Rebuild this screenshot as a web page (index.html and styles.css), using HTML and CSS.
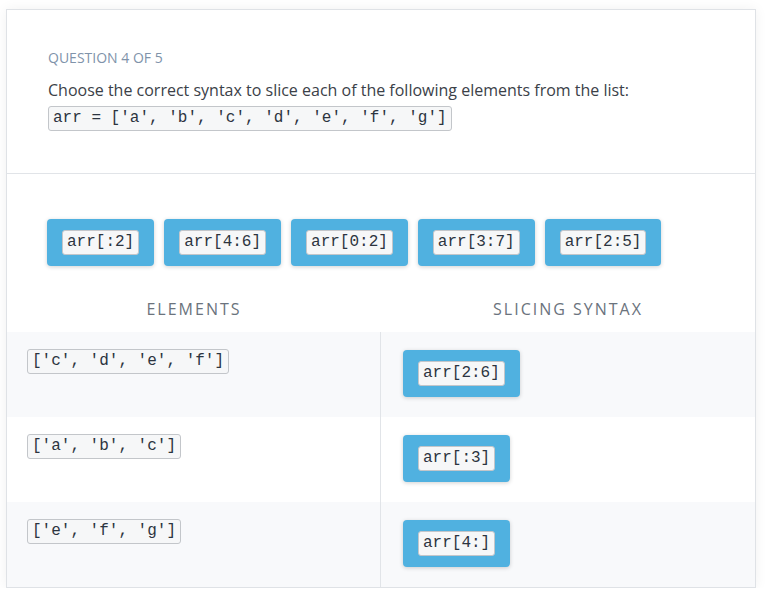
FILE: index.html
```html
<!DOCTYPE html>
<html>
<head>
<meta charset="utf-8">
<link rel="stylesheet" href="styles.css">
</head>
<body>
<div class="card">
  <div class="head">
    <div class="label">QUESTION 4 OF 5</div>
    <div class="prompt">Choose the correct syntax to slice each of the following elements from the list:</div>
    <div class="snippet"><code class="code">arr = ['a', 'b', 'c', 'd', 'e', 'f', 'g']</code></div>
  </div>
  <div class="bank">
    <div class="chip"><code class="code">arr[:2]</code></div>
    <div class="chip"><code class="code">arr[4:6]</code></div>
    <div class="chip"><code class="code">arr[0:2]</code></div>
    <div class="chip"><code class="code">arr[3:7]</code></div>
    <div class="chip"><code class="code">arr[2:5]</code></div>
  </div>
  <div class="table">
    <div class="th">ELEMENTS</div>
    <div class="th">SLICING SYNTAX</div>

    <div class="cell left shade"><code class="code">['c', 'd', 'e', 'f']</code></div>
    <div class="cell right shade"><div class="chip"><code class="code">arr[2:6]</code></div></div>

    <div class="cell left"><code class="code">['a', 'b', 'c']</code></div>
    <div class="cell right"><div class="chip"><code class="code">arr[:3]</code></div></div>

    <div class="cell left shade"><code class="code">['e', 'f', 'g']</code></div>
    <div class="cell right shade"><div class="chip"><code class="code">arr[4:]</code></div></div>
  </div>
</div>
</body>
</html>
```
FILE: styles.css
```css
html, body {
  margin: 0;
  background: #ffffff;
}
body {
  padding: 9px 0 0 6px;
  font-family: "Open Sans", "Liberation Sans", sans-serif;
}
.card {
  width: 748px;
  border: 1px solid #dfe2e6;
  background: #ffffff;
  box-shadow: 0 0 12px rgba(0, 0, 0, 0.06);
}
.head {
  padding: 38px 40px 42px 41px;
  border-bottom: 1px solid #e1e4e8;
}
.label {
  font-size: 14px;
  line-height: 20px;
  color: #8093aa;
}
.prompt {
  margin-top: 10px;
  font-size: 16px;
  line-height: 24px;
  color: #3b4148;
}
.snippet {
  display: flex;
  margin-top: 4px;
}
.code {
  display: block;
  font-family: "Liberation Mono", "DejaVu Sans Mono", monospace;
  font-size: 16px;
  line-height: 23px;
  color: #2c3440;
  background: #f6f7f8;
  border: 1px solid #c3c6ca;
  border-radius: 3px;
  padding: 0 4px;
}
.bank {
  display: flex;
  gap: 10px;
  padding: 45px 40px 0;
}
.chip {
  display: flex;
  background: #50b1e0;
  border-radius: 4px;
  padding: 11px 15px;
  box-shadow: 0 1px 4px rgba(0, 0, 0, 0.18);
}
.table {
  display: grid;
  grid-template-columns: 374px 374px;
}
.th {
  padding: 32px 0 12px;
  text-align: center;
  font-size: 16px;
  line-height: 22px;
  letter-spacing: 2px;
  color: #6b737d;
}
.cell {
  height: 85px;
  box-sizing: border-box;
  display: flex;
  align-items: flex-start;
}
.shade {
  background: #f8f9fb;
}
.left {
  padding: 17px 20px;
  border-right: 1px solid #e1e4e8;
}
.right {
  padding: 18px 22px;
}
```
